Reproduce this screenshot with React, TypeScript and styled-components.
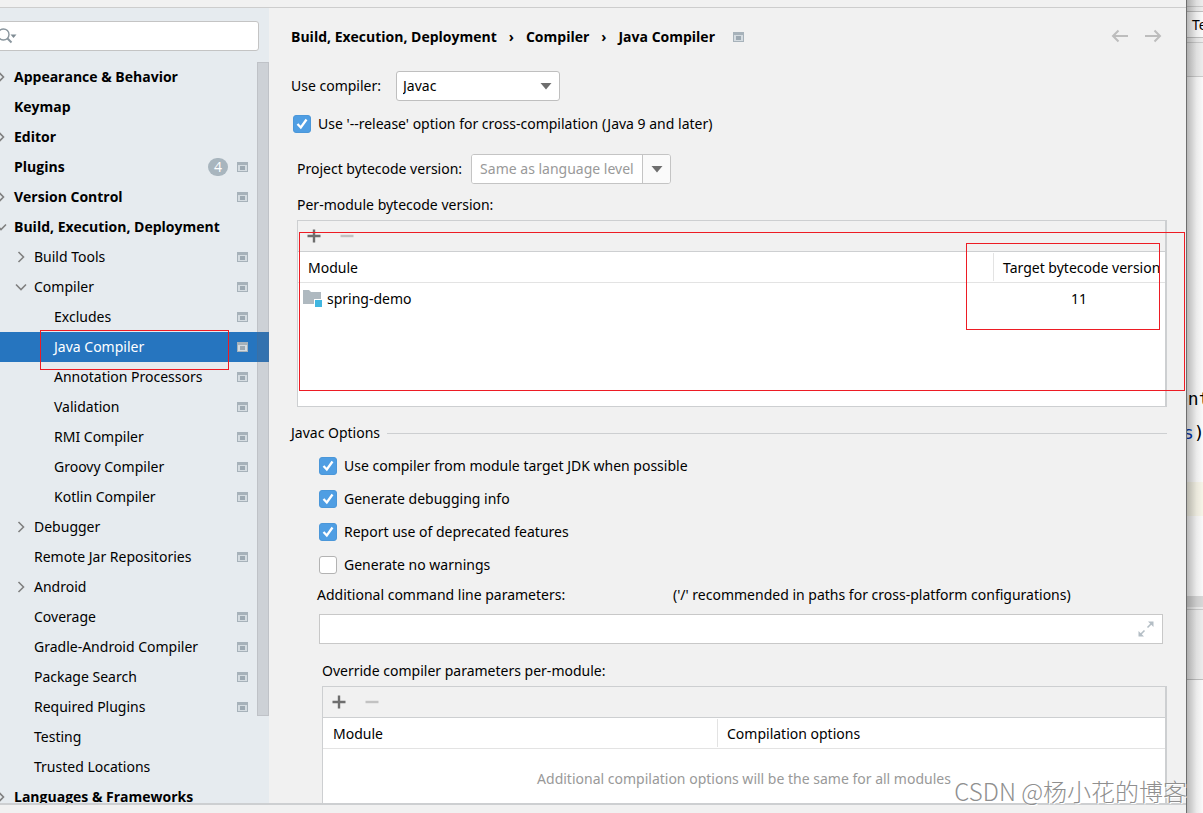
import React from "react";
import styled, { createGlobalStyle, css } from "styled-components";

const GlobalStyle = createGlobalStyle`
  * { box-sizing: border-box; }
  body {
    margin: 0;
    background: #f1f1f1;
    color: #000;
    font-family: "Noto Sans", "Noto Sans CJK SC", sans-serif;
    font-size: 14px;
    line-height: 20px;
  }
  button, input, select { font: inherit; color: inherit; margin: 0; }
  button { padding: 0; border: 0; background: none; }
`;

const Screen = styled.div`
  position: relative;
  display: flex;
  height: 100vh;
  overflow: hidden;
`;

/* ---------- settings dialog ---------- */

const Dialog = styled.div`
  flex: 1;
  min-width: 0;
  display: flex;
  flex-direction: column;
  background: #f1f1f1;
  border-right: 1px solid #6e6e6e;
`;

const TitleEdge = styled.div`
  height: 8px;
  flex: none;
  border-bottom: 1px solid #cdcdcd;
`;

const DialogBody = styled.div`
  flex: 1;
  min-height: 0;
  display: flex;
  overflow: hidden;
`;

const DialogFooter = styled.div`
  height: 10px;
  flex: none;
  border-top: 2px solid #cdcfd1;
`;

/* ---------- sidebar ---------- */

const Sidebar = styled.aside`
  width: 269px;
  flex: none;
  overflow: hidden;
  padding-top: 13px;
  background: #e6ebef;
`;

const SearchBox = styled.label`
  display: flex;
  align-items: center;
  height: 30px;
  margin: 0 10px 11px -10px;
  padding-left: 7px;
  background: #fff;
  border: 1px solid #c4c4c4;
  border-radius: 3px;
`;

const SearchInput = styled.input`
  flex: 1;
  min-width: 0;
  border: 0;
  outline: 0;
  background: none;
`;

const Tree = styled.nav`
  position: relative;
  margin-left: -10px;
`;

const TreeRow = styled.button<{ $level: number; $selected?: boolean }>`
  position: relative;
  display: flex;
  align-items: center;
  gap: 5px;
  width: 100%;
  height: 30px;
  padding: 0 21px 0 ${(p) => 3 + p.$level * 20}px;
  text-align: left;
  ${(p) =>
    p.$level === 0 &&
    css`
      font-family: "Open Sans", "Noto Sans", sans-serif;
      font-weight: 700;
    `}
  ${(p) =>
    p.$selected &&
    css`
      background: #2675bf;
      color: #fff;
    `}
`;

const Arrow = styled.span`
  display: flex;
  width: 16px;
  height: 16px;
  flex: none;
`;

const TreeLabel = styled.span`
  flex: 1;
  white-space: nowrap;
`;

const Badge = styled.span`
  width: 20px;
  height: 18px;
  margin-right: 4px;
  border-radius: 9px;
  background: #a8b5be;
  color: #fff;
  font-weight: 400;
  line-height: 18px;
  text-align: center;
`;

const ScrollThumb = styled.span`
  position: absolute;
  top: 0;
  right: 0;
  width: 12px;
  height: 654px;
  background: rgba(105, 105, 115, 0.2);
  border: 1px solid rgba(105, 105, 115, 0.14);
`;

const Highlight = styled.span<{ $top: number; $left?: number; $right: number; $height: number; $width?: number }>`
  position: absolute;
  z-index: 2;
  top: ${(p) => p.$top}px;
  right: ${(p) => p.$right}px;
  ${(p) => p.$left !== undefined && `left: ${p.$left}px;`}
  ${(p) => p.$width !== undefined && `width: ${p.$width}px;`}
  height: ${(p) => p.$height}px;
  border: 1px solid #ed1c24;
  pointer-events: none;
`;

/* ---------- content ---------- */

const Content = styled.main`
  flex: 1;
  min-width: 0;
  display: flex;
  flex-direction: column;
  padding: 14px 19px 0 22px;
`;

const Header = styled.header`
  display: flex;
  align-items: center;
  justify-content: space-between;
  height: 30px;
  flex: none;
  margin-bottom: 19px;
  padding-right: 5px;
`;

const Crumbs = styled.div`
  display: flex;
  align-items: center;
  gap: 12px;
  font-family: "Open Sans", "Noto Sans", sans-serif;
  font-weight: 700;
  > svg { margin-left: 6px; }
`;

const HistoryButtons = styled.div`
  display: flex;
  gap: 15px;
`;

const IconButton = styled.button`
  display: flex;
`;

const Field = styled.div<{ $gap: number; $indent?: number }>`
  display: flex;
  align-items: center;
  gap: ${(p) => p.$gap}px;
  height: 30px;
  flex: none;
  margin-left: ${(p) => p.$indent ?? 0}px;
`;

const SelectWrap = styled.div`
  display: grid;
  width: 164px;
  height: 30px;
  align-items: center;
  > * { grid-area: 1 / 1; }
  > svg { justify-self: end; margin-right: 8px; pointer-events: none; }
`;

const Select = styled.select`
  appearance: none;
  width: 100%;
  height: 30px;
  padding: 0 6px;
  background: #fff;
  border: 1px solid #bfbfbf;
  border-radius: 3px;
`;

const Combo = styled.div`
  display: flex;
  width: 200px;
  height: 30px;
  background: #fff;
  border: 1px solid #c4c4c4;
  border-radius: 3px;
  overflow: hidden;
`;

const ComboInput = styled.input`
  flex: 1;
  min-width: 0;
  padding: 0 0 0 8px;
  border: 0;
  outline: 0;
  &::placeholder { color: #999; opacity: 1; }
`;

const ComboButton = styled.button`
  display: flex;
  align-items: center;
  justify-content: center;
  width: 28px;
  background: #fafafa;
  border-left: 1px solid #c4c4c4;
`;

const CheckLabel = styled.label`
  display: flex;
  align-items: center;
  gap: 7px;
  height: 20px;
`;

const CheckBoxCell = styled.span`
  display: grid;
  width: 18px;
  height: 18px;
  > * { grid-area: 1 / 1; }
  > svg { pointer-events: none; }
`;

const CheckInput = styled.input`
  appearance: none;
  width: 18px;
  height: 18px;
  background: #fff;
  border: 1px solid #b3b3b3;
  border-radius: 3px;
  &:checked { background: #4f9ee3; border-color: #4b97d9; }
`;

const ReleaseOption = styled.div`
  margin: 13px 0 20px 2px;
`;

const Caption = styled.div`
  margin: 11px 0 5px 6px;
`;

const Panel = styled.section<{ $indent: number; $height: number }>`
  position: relative;
  flex: none;
  height: ${(p) => p.$height}px;
  margin-left: ${(p) => p.$indent}px;
  background: #fff;
  border: 1px solid #cdcfd1;
  border-right-width: 2px;
`;

const Toolbar = styled.div`
  display: flex;
  align-items: center;
  gap: 17px;
  height: 31px;
  padding-left: 8px;
  background: #f1f1f1;
  border-bottom: 1px solid #cdcfd1;
`;

const Table = styled.table`
  width: 100%;
  table-layout: fixed;
  border-collapse: separate;
  border-spacing: 0;
  th, td { height: 31px; padding: 0; font-weight: 400; text-align: left; white-space: nowrap; }
  thead th { border-bottom: 1px solid #e3e3e3; }
`;

const HeadCell = styled.span<{ $divided?: boolean }>`
  display: flex;
  align-items: center;
  height: 28px;
  padding: 2px 0 0 ${(p) => (p.$divided ? 9 : 10)}px;
  border-left: ${(p) => (p.$divided ? "1px solid #e3e3e3" : "0")};
`;

const ModuleName = styled.span`
  display: flex;
  align-items: center;
  gap: 4px;
  padding-left: 5px;
`;

const Version = styled.span`
  display: block;
  text-align: center;
`;

const GroupTitle = styled.h2`
  display: flex;
  align-items: center;
  gap: 7px;
  margin: 16px 0 13px;
  font-size: 14px;
  line-height: 20px;
  font-weight: 400;
  &::after { content: ""; flex: 1; border-top: 1px solid #cdcfd1; }
`;

const Options = styled.div`
  display: flex;
  flex-direction: column;
  gap: 13px;
  margin: 0 0 10px 28px;
`;

const ParameterCaptions = styled.div`
  display: grid;
  grid-template-columns: 356px 1fr;
  margin: 0 0 9px 26px;
  white-space: nowrap;
`;

const ParameterBox = styled.div`
  display: flex;
  align-items: center;
  height: 30px;
  flex: none;
  margin: 0 4px 17px 28px;
  padding-right: 8px;
  background: #fff;
  border: 1px solid #c8c8c8;
`;

const ParameterInput = styled.input`
  flex: 1;
  min-width: 0;
  height: 26px;
  border: 0;
  outline: 0;
`;

const OverrideCaption = styled.div`
  margin: 0 0 5px 31px;
`;

const EmptyNote = styled.p`
  margin: 20px 0 0;
  color: #999;
  text-align: center;
`;

/* ---------- editor window behind the dialog ---------- */

const Editor = styled.div`
  position: relative;
  width: 16px;
  flex: none;
  display: flex;
  flex-direction: column;
  overflow: hidden;
  background: #fff;
  white-space: nowrap;
  &::after {
    content: "";
    position: absolute;
    inset: 0;
    background: linear-gradient(to right, rgba(0, 0, 0, 0.28), rgba(0, 0, 0, 0.08) 60%, rgba(0, 0, 0, 0.02));
  }
`;

const Band = styled.div<{ $height: number; $color: string; $line?: string }>`
  height: ${(p) => p.$height}px;
  flex: none;
  background: ${(p) => p.$color};
  border-bottom: ${(p) => (p.$line ? `1px solid ${p.$line}` : "0")};
`;

const TabField = styled(Band)`
  padding-left: 5px;
  line-height: 26px;
`;

const CodeLine = styled.div<{ $shift: number }>`
  height: 34px;
  flex: none;
  margin-left: ${(p) => p.$shift}px;
  font-family: "DejaVu Sans Mono", monospace;
  font-size: 18px;
  line-height: 34px;
`;

const Blue = styled.span`
  color: #0033b3;
`;

const Watermark = styled.div`
  position: absolute;
  z-index: 3;
  right: 16px;
  bottom: 5px;
  color: #8f8f8f;
  font-family: "Noto Sans CJK SC", sans-serif;
  font-weight: 300;
  font-size: 24px;
  line-height: 34px;
  text-shadow: 1px 1px 0 #fff;
  white-space: nowrap;
`;

/* ---------- icons ---------- */

const ProjectIcon = () => (
  <svg width="11" height="11" viewBox="0 0 11 11" aria-hidden="true">
    <path d="M0 0H11V10H0ZM1 3V9H10V3Z" fill="#a7b2ba" fillRule="evenodd" />
    <path d="M1 3H10V9H1Z" fill="#d5dce1" />
    <path d="M3 4H8V8H3Z" fill="#9da9b2" />
  </svg>
);

const Chevron = ({ open }: { open?: boolean }) => (
  <svg width="16" height="16" viewBox="0 0 16 16" fill="none" stroke="#808080" strokeWidth="1.6" aria-hidden="true">
    <path d={open ? "M3 5.5L8 10.5L13 5.5" : "M5.5 3L10.5 8L5.5 13"} />
  </svg>
);

const SearchIcon = () => (
  <svg width="20" height="16" viewBox="0 0 20 16" fill="none" aria-hidden="true">
    <circle cx="5.500" cy="6.500" r="5.500" stroke="#8a969e" strokeWidth="1.4" />
    <path d="M9.500 10.500L13.500 14.500" stroke="#8a969e" strokeWidth="2" />
    <path d="M12.500 6.500H18.500L15.500 10Z" fill="#7f8b93" />
  </svg>
);

const DropArrow = () => (
  <svg width="12" height="7" viewBox="0 0 12 7" aria-hidden="true">
    <path d="M0.500 0H11.500L6 6.500Z" fill="#6e6e6e" />
  </svg>
);

const HistoryArrow = ({ forward }: { forward?: boolean }) => (
  <svg width="18" height="16" viewBox="0 0 18 16" fill="none" stroke="#bdbdbd" strokeWidth="2" aria-hidden="true">
    <path d={forward ? "M1 7H16M10.500 1.500L16 7L10.500 12.500" : "M17 7H2M7.500 1.500L2 7L7.500 12.500"} />
  </svg>
);

const PlusIcon = () => (
  <svg width="16" height="16" viewBox="0 0 16 16" stroke="#6e6e6e" strokeWidth="2.400" aria-hidden="true">
    <path d="M1.500 8H14.500M8 1.500V14.500" />
  </svg>
);

const MinusIcon = () => (
  <svg width="16" height="16" viewBox="0 0 16 16" stroke="#c2c2c2" strokeWidth="2.400" aria-hidden="true">
    <path d="M1.500 8H14.500" />
  </svg>
);

const FolderIcon = () => (
  <svg width="20" height="20" viewBox="0 0 20 20" aria-hidden="true">
    <path d="M0 1H6L8 3H18V15H0Z" fill="#afb9c0" />
    <path d="M11 10H20V19H11Z" fill="#fff" />
    <path d="M12 11H19V18H12Z" fill="#40b6e0" />
  </svg>
);

const ExpandIcon = () => (
  <svg width="16" height="16" viewBox="0 0 16 16" fill="#b4bec5" stroke="#b4bec5" aria-hidden="true">
    <path d="M10 0.500H15.500V6Z" stroke="none" />
    <path d="M0.500 10V15.500H6Z" stroke="none" />
    <path d="M9.500 6.500L13.500 2.500M6.500 9.500L2.500 13.500" strokeWidth="1.6" />
  </svg>
);

const Tick = () => (
  <svg width="18" height="18" viewBox="0 0 18 18" fill="none" stroke="#fff" strokeWidth="2.300" aria-hidden="true">
    <path d="M4.500 9L7.800 12.500L13.500 4.500" />
  </svg>
);

/* ---------- parts ---------- */

type Node = {
  label: string;
  level: number;
  arrow?: "open" | "closed";
  project?: boolean;
  badge?: number;
  selected?: boolean;
};

const nodes: Node[] = [
  { label: "Appearance & Behavior", level: 0, arrow: "closed" },
  { label: "Keymap", level: 0 },
  { label: "Editor", level: 0, arrow: "closed" },
  { label: "Plugins", level: 0, project: true, badge: 4 },
  { label: "Version Control", level: 0, arrow: "closed", project: true },
  { label: "Build, Execution, Deployment", level: 0, arrow: "open" },
  { label: "Build Tools", level: 1, arrow: "closed", project: true },
  { label: "Compiler", level: 1, arrow: "open", project: true },
  { label: "Excludes", level: 2, project: true },
  { label: "Java Compiler", level: 2, project: true, selected: true },
  { label: "Annotation Processors", level: 2, project: true },
  { label: "Validation", level: 2, project: true },
  { label: "RMI Compiler", level: 2, project: true },
  { label: "Groovy Compiler", level: 2, project: true },
  { label: "Kotlin Compiler", level: 2, project: true },
  { label: "Debugger", level: 1, arrow: "closed" },
  { label: "Remote Jar Repositories", level: 1, project: true },
  { label: "Android", level: 1, arrow: "closed" },
  { label: "Coverage", level: 1, project: true },
  { label: "Gradle-Android Compiler", level: 1, project: true },
  { label: "Package Search", level: 1, project: true },
  { label: "Required Plugins", level: 1, project: true },
  { label: "Testing", level: 1 },
  { label: "Trusted Locations", level: 1 },
  { label: "Languages & Frameworks", level: 0, arrow: "closed" },
];

const options = [
  { label: "Use compiler from module target JDK when possible", on: true },
  { label: "Generate debugging info", on: true },
  { label: "Report use of deprecated features", on: true },
  { label: "Generate no warnings", on: false },
];

const Check = ({ label, on }: { label: string; on: boolean }) => {
  const [checked, setChecked] = React.useState(on);
  return (
    <CheckLabel>
      <CheckBoxCell>
        <CheckInput type="checkbox" checked={checked} onChange={(e) => setChecked(e.target.checked)} />
        {checked && <Tick />}
      </CheckBoxCell>
      {label}
    </CheckLabel>
  );
};

const TableTools = () => (
  <Toolbar>
    <IconButton aria-label="Add">
      <PlusIcon />
    </IconButton>
    <IconButton aria-label="Remove" disabled>
      <MinusIcon />
    </IconButton>
  </Toolbar>
);

const SettingsTree = () => (
  <Tree aria-label="Settings">
    {nodes.map((n) => (
      <TreeRow key={n.label} $level={n.level} $selected={n.selected}>
        <Arrow>{n.arrow && <Chevron open={n.arrow === "open"} />}</Arrow>
        <TreeLabel>{n.label}</TreeLabel>
        {n.badge && <Badge>{n.badge}</Badge>}
        {n.project && <ProjectIcon />}
        {n.selected && <Highlight $top={-2} $left={50} $right={40} $height={40} />}
      </TreeRow>
    ))}
    <ScrollThumb />
  </Tree>
);

export default function App() {
  return (
    <Screen>
      <GlobalStyle />
      <Dialog>
        <TitleEdge />
        <DialogBody>
          <Sidebar>
            <SearchBox>
              <SearchIcon />
              <SearchInput type="text" aria-label="Search settings" />
            </SearchBox>
            <SettingsTree />
          </Sidebar>
          <Content>
            <Header>
              <Crumbs>
                <span>Build, Execution, Deployment</span>
                <span>›</span>
                <span>Compiler</span>
                <span>›</span>
                <span>Java Compiler</span>
                <ProjectIcon />
              </Crumbs>
              <HistoryButtons>
                <IconButton aria-label="Back">
                  <HistoryArrow />
                </IconButton>
                <IconButton aria-label="Forward">
                  <HistoryArrow forward />
                </IconButton>
              </HistoryButtons>
            </Header>

            <Field $gap={15}>
              <label htmlFor="compiler">Use compiler:</label>
              <SelectWrap>
                <Select id="compiler" defaultValue="Javac">
                  <option>Javac</option>
                </Select>
                <DropArrow />
              </SelectWrap>
            </Field>
            <ReleaseOption>
              <Check label="Use '--release' option for cross-compilation (Java 9 and later)" on />
            </ReleaseOption>
            <Field $gap={9} $indent={6}>
              <label htmlFor="bytecode">Project bytecode version:</label>
              <Combo>
                <ComboInput id="bytecode" type="text" placeholder="Same as language level" />
                <ComboButton aria-label="Show versions">
                  <DropArrow />
                </ComboButton>
              </Combo>
            </Field>

            <Caption>Per-module bytecode version:</Caption>
            <Panel $indent={6} $height={187}>
              <TableTools />
              <Table>
                <colgroup>
                  <col />
                  <col style={{ width: 172 }} />
                </colgroup>
                <thead>
                  <tr>
                    <th scope="col">
                      <HeadCell>Module</HeadCell>
                    </th>
                    <th scope="col">
                      <HeadCell $divided>Target bytecode version</HeadCell>
                    </th>
                  </tr>
                </thead>
                <tbody>
                  <tr>
                    <td>
                      <ModuleName>
                        <FolderIcon />
                        spring-demo
                      </ModuleName>
                    </td>
                    <td>
                      <Version>11</Version>
                    </td>
                  </tr>
                </tbody>
              </Table>
              <Highlight $top={11} $left={1} $right={-20} $height={159} />
              <Highlight $top={22} $right={5} $width={194} $height={87} />
            </Panel>

            <GroupTitle>Javac Options</GroupTitle>
            <Options>
              {options.map((o) => (
                <Check key={o.label} {...o} />
              ))}
            </Options>
            <ParameterCaptions>
              <label htmlFor="parameters">Additional command line parameters:</label>
              <span>('/' recommended in paths for cross-platform configurations)</span>
            </ParameterCaptions>
            <ParameterBox>
              <ParameterInput id="parameters" type="text" />
              <IconButton aria-label="Expand">
                <ExpandIcon />
              </IconButton>
            </ParameterBox>

            <OverrideCaption>Override compiler parameters per-module:</OverrideCaption>
            <Panel $indent={31} $height={187}>
              <TableTools />
              <Table>
                <colgroup>
                  <col style={{ width: 394 }} />
                  <col />
                </colgroup>
                <thead>
                  <tr>
                    <th scope="col">
                      <HeadCell>Module</HeadCell>
                    </th>
                    <th scope="col">
                      <HeadCell $divided>Compilation options</HeadCell>
                    </th>
                  </tr>
                </thead>
              </Table>
              <EmptyNote>Additional compilation options will be the same for all modules</EmptyNote>
            </Panel>
          </Content>
        </DialogBody>
        <DialogFooter />
      </Dialog>

      <Editor>
        <Band $height={7} $color="#f2f2f2" $line="#d0d0d0" />
        <Band $height={5} $color="#f2f2f2" $line="#c4c4c4" />
        <TabField $height={26} $color="#fff" $line="#c4c4c4">
          Te
        </TabField>
        <Band $height={5} $color="#f2f2f2" $line="#d0d0d0" />
        <Band $height={34} $color="#f2f2f2" $line="#d0d0d0" />
        <Band $height={305} $color="#fff" />
        <CodeLine $shift={-10}>
          <Blue>o</Blue>nt
        </CodeLine>
        <CodeLine $shift={-4}>
          <Blue>s</Blue>)
        </CodeLine>
        <Band $height={32} $color="#fff" />
        <Band $height={34} $color="#fcfaed" />
        <Band $height={80} $color="#fff" />
        <Band $height={11} $color="#dcdcdc" />
        <Band $height={3} $color="#f2f2f2" $line="#d0d0d0" />
        <Band $height={70} $color="#f2f2f2" $line="#c4c4c4" />
      </Editor>
      <Watermark>CSDN @杨小花的博客</Watermark>
    </Screen>
  );
}
